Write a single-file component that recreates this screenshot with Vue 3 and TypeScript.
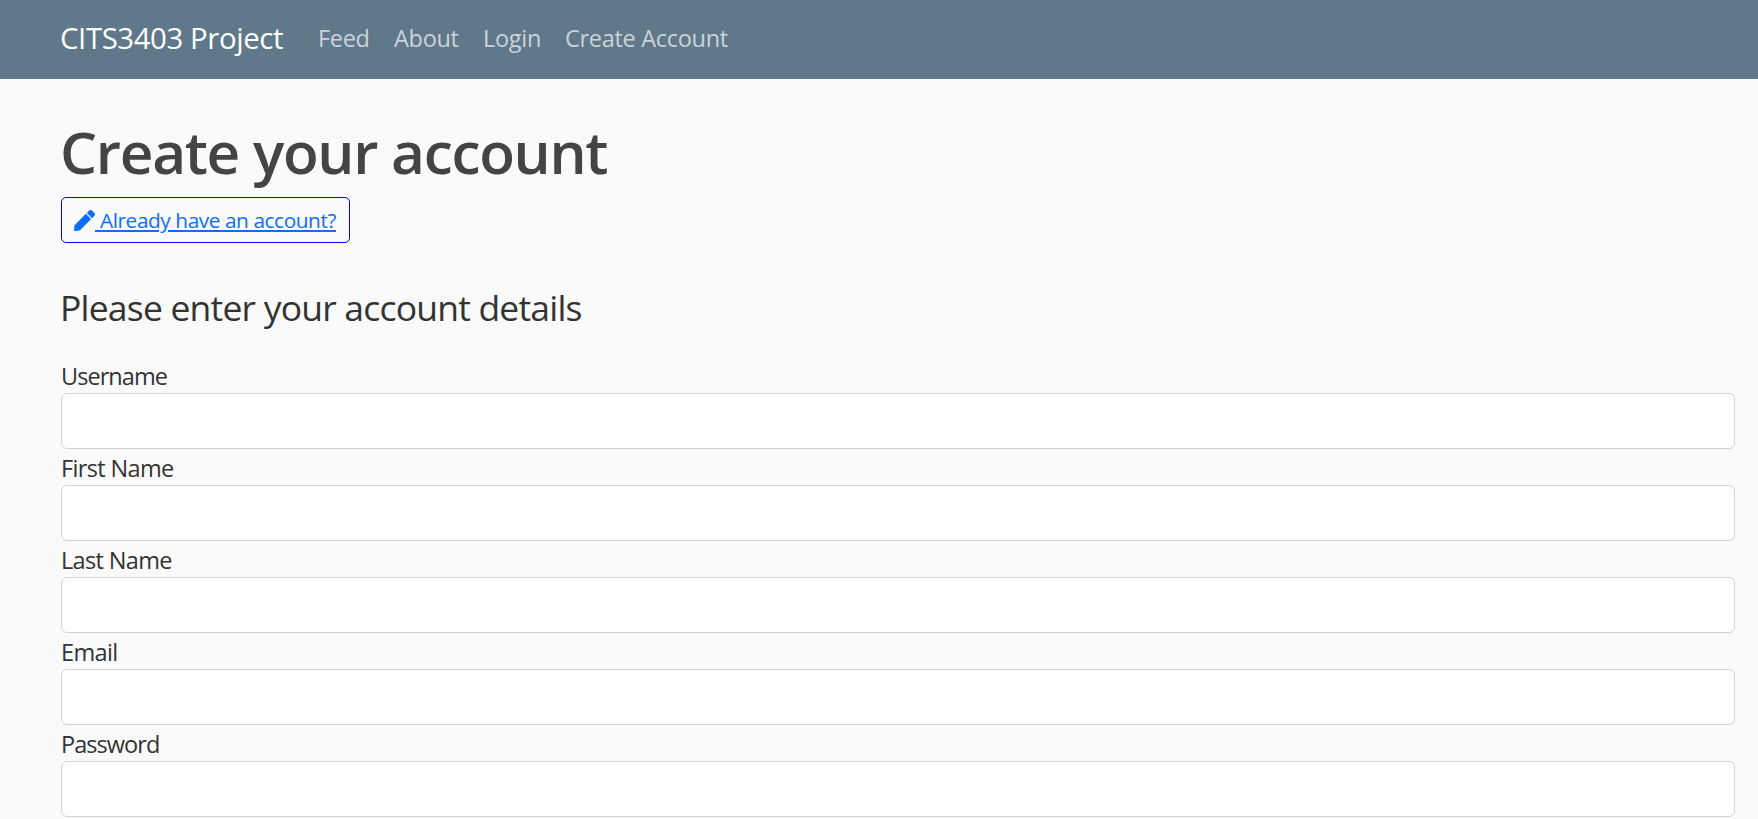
<script setup lang="ts">
interface NavLink {
  id: string
  label: string
}

const links: NavLink[] = [
  { id: 'feed', label: 'Feed' },
  { id: 'about', label: 'About' },
  { id: 'login', label: 'Login' },
  { id: 'create', label: 'Create Account' },
]

const fields = [
  { id: 'username', label: 'Username', type: 'text' },
  { id: 'first-name', label: 'First Name', type: 'text' },
  { id: 'last-name', label: 'Last Name', type: 'text' },
  { id: 'email', label: 'Email', type: 'email' },
  { id: 'password', label: 'Password', type: 'password' },
]
</script>

<template>
  <div class="page">
    <nav class="navbar">
      <a class="brand">CITS3403 Project</a>
      <a v-for="link in links" :key="link.id" class="nav-link" :class="link.id">{{ link.label }}</a>
    </nav>
    <main class="content">
      <h1 class="title">Create your account</h1>
      <a class="login-button">
        <svg class="pencil" viewBox="0 0 512 512" aria-hidden="true">
          <path
            fill="currentColor"
            d="M290.7 93.2l128 128-278 278-114.100 12.600C11.400 513.500-1.600 500.600.1 485.300l12.700-114.200 277.900-277.900zm207.200-19.100l-60.100-60.100c-18.700-18.700-49.100-18.700-67.900 0l-56.500 56.500 128 128 56.500-56.500c18.800-18.800 18.800-49.200 0-67.900z"
          />
        </svg>
        <span class="login-text">&nbsp;Already have an account?</span>
      </a>
      <h2 class="subtitle">Please enter your account details</h2>
      <form class="form">
        <div v-for="field in fields" :key="field.id" class="field">
          <label class="label" :class="field.id" :for="field.id">{{ field.label }}</label>
          <input :id="field.id" class="input" :type="field.type" />
        </div>
      </form>
    </main>
  </div>
</template>

<style>
body {
  background: #fafafa;
}
</style>

<style scoped>
.page {
  height: 819px;
  overflow: hidden;
  background: #fafafa;
  color: #333;
  font-family: 'Segoe UI', 'Open Sans', 'Noto Sans', sans-serif;
  font-size: 23.5px;
  line-height: 36px;
}
.navbar {
  box-sizing: border-box;
  display: flex;
  align-items: center;
  height: 79px;
  padding: 0 0 3px 60px;
  background: #5f788a;
  white-space: nowrap;
}
.brand {
  flex: 0 0 258px;
  color: #fff;
  font-size: 29.4px;
  letter-spacing: -0.42px;
}
.nav-link {
  flex: none;
  color: #cbd3d9;
  letter-spacing: -0.3px;
}
.feed { width: 76px; }
.about { width: 89px; }
.login { width: 82px; }
.content {
  display: flex;
  flex-direction: column;
  align-items: flex-start;
  padding: 36px 23px 0 61px;
}
.title {
  margin: 0 0 0 -1px;
  height: 82px;
  color: #444;
  font-size: 58.5px;
  font-weight: 600;
  line-height: 72px;
  letter-spacing: -1.3px;
  white-space: nowrap;
}
.login-button {
  box-sizing: border-box;
  display: flex;
  align-items: center;
  width: 289px;
  height: 46px;
  padding-left: 12px;
  border: 1px solid #0000ff;
  border-radius: 5px;
  color: #0d6efd;
  font-size: 20.8px;
  letter-spacing: -0.42px;
  white-space: nowrap;
}
.pencil {
  width: 21px;
  height: 21px;
}
.login-text {
  text-decoration: underline;
  text-decoration-thickness: 2px;
  text-underline-offset: 2px;
}
.subtitle {
  margin: 43px 0 28px -1px;
  font-size: 35.5px;
  font-weight: 400;
  line-height: 43px;
  white-space: nowrap;
  letter-spacing: -0.8px;
}
.form {
  width: 100%;
}
.field {
  display: flex;
  flex-direction: column;
}
.label {
  box-sizing: border-box;
  height: 36px;
  width: max-content;
  padding-top: 1px;
  line-height: 36px;
  letter-spacing: -0.65px;
}
.username,
.password {
  letter-spacing: -0.95px;
}
.input {
  box-sizing: border-box;
  width: 100%;
  height: 56px;
  padding: 9px 18px;
  border: 1px solid #ced4da;
  border-radius: 6px;
  background: #fff;
  font: inherit;
  outline: none;
}
</style>
